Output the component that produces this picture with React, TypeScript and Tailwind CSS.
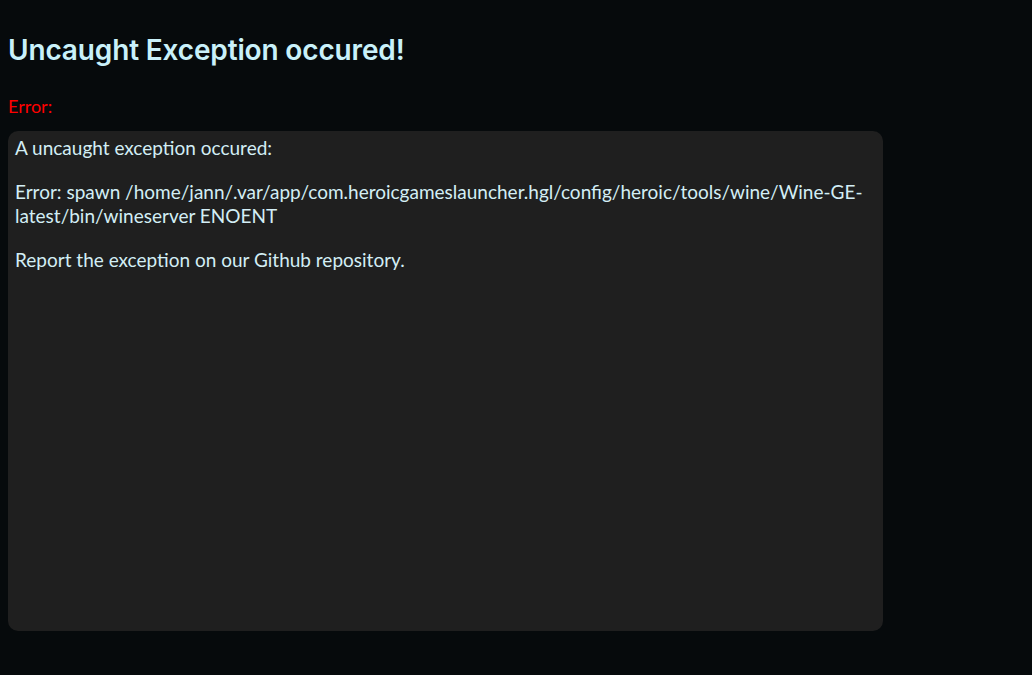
export default function App() {
  return (
    <div className="min-h-[675px] w-full bg-[#060a0c] px-2 pt-[30px]">
      <h1 className="font-['Inter','Noto_Sans',sans-serif] text-[28px] font-semibold leading-[40px] tracking-[-0.15px] text-[#c9f1fa]">
        Uncaught Exception occured!
      </h1>
      <div className="mt-[24px] font-['Lato','Open_Sans',sans-serif] text-[18px] leading-[24px] text-[#ff0000]">
        Error:
      </div>
      <div className="mt-[13px] flex h-[500px] w-[875px] flex-col gap-[20px] rounded-[10px] bg-[#1f1f1f] px-[7px] pt-[5px] font-['Lato','Open_Sans',sans-serif] text-[19px] leading-[24px] text-[#d3eef5]">
        <p>A uncaught exception occured:</p>
        <p>
          Error: spawn /home/jann/.var/app/com.heroicgameslauncher.hgl/config/heroic/tools/wine/Wine-GE-latest/bin/wineserver ENOENT
        </p>
        <p>Report the exception on our Github repository.</p>
      </div>
    </div>
  );
}
